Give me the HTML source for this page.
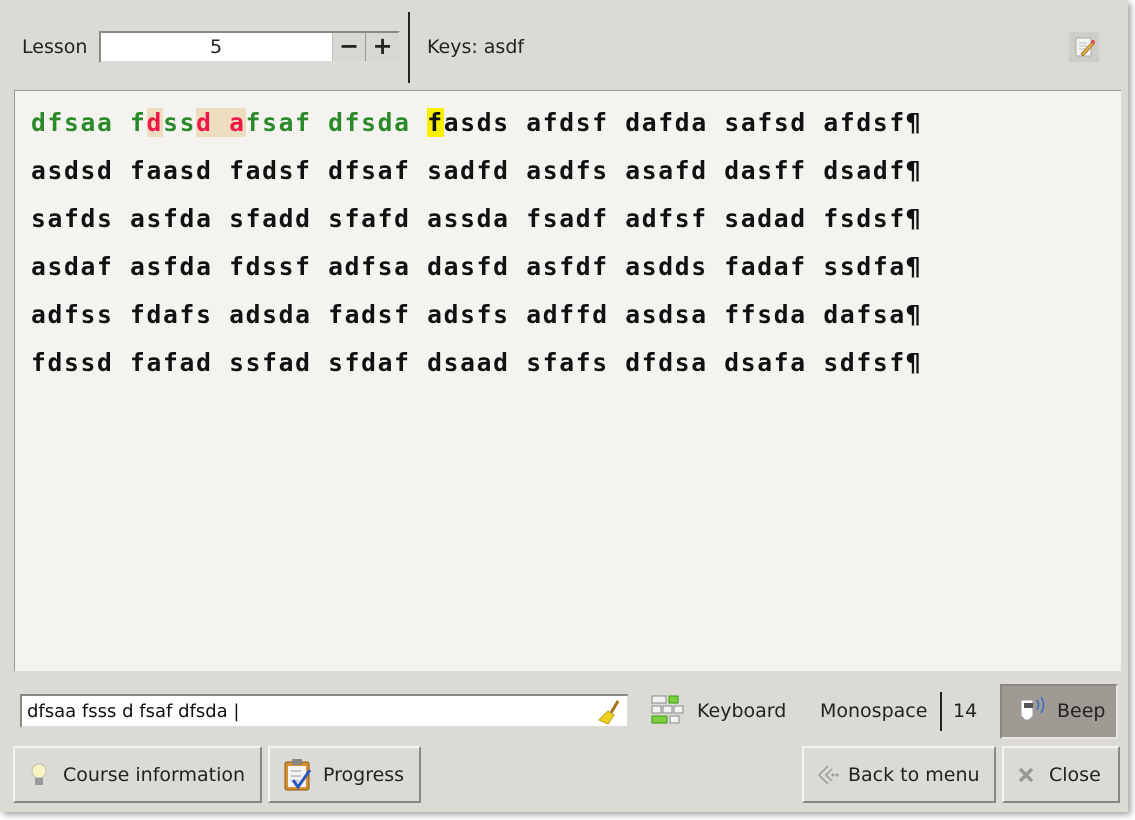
<!DOCTYPE html>
<html><head><style>
body{margin:0;width:1135px;height:820px;background:#ffffff;position:relative;overflow:hidden;font-family:"DejaVu Sans","Liberation Sans",sans-serif;font-size:19px;color:#222}
.win{position:absolute;left:0;top:0;width:1128px;height:812px;background:#dcdad5;box-shadow:3px 3px 6px rgba(0,0,0,.35)}
.abs{position:absolute}
.txt{position:absolute;left:14px;top:90px;width:1106px;height:580px;background:#f5f3f0;border-top:1px solid #9c9a94;border-left:1px solid #9c9a94}
.lines{position:absolute;left:16px;top:8px;font-family:"DejaVu Sans Mono","Liberation Mono",monospace;font-weight:bold;font-size:24.6px;letter-spacing:1.7px;line-height:48px;color:#111;white-space:pre}
.g{color:#2a8a2a}.r{color:#f0184a;background:#eeddbf}.h{background:#eeddbf}.y{background:#f8f000}
.btn{position:absolute;background:#dcdad5;border:2px solid;border-color:#f4f3f1 #8a8883 #8a8883 #f4f3f1;box-sizing:border-box;display:flex;align-items:center}
</style></head><body>
<div class="win">
<div class="abs" style="left:22px;top:36px">Lesson</div>
<div class="abs" style="left:99px;top:31px;width:301px;height:32px;background:#fff;border:2px solid;border-color:#8a8883 #dcdad5 #dcdad5 #8a8883;box-sizing:border-box"></div>
<div class="abs" style="left:210px;top:36px">5</div>
<div class="abs" style="left:332px;top:33px;width:32px;height:28px;background:#d9d7d2;border-left:1px solid #bbb;font-size:24px;font-weight:bold;text-align:center;line-height:26px">−</div>
<div class="abs" style="left:365px;top:33px;width:33px;height:28px;background:#d9d7d2;border-left:1px solid #999;font-size:24px;font-weight:bold;text-align:center;line-height:26px">+</div>
<div class="abs" style="left:408px;top:12px;width:2px;height:71px;background:#222"></div>
<div class="abs" style="left:427px;top:36px">Keys: asdf</div>
<div class="abs" style="left:1069px;top:32px;width:30px;height:30px;background:#cfcdc8"></div>
<svg class="abs" style="left:1074px;top:36px" width="22" height="22"><rect x="2" y="2" width="15" height="18" fill="#f4f4f4" stroke="#aaa"/><path d="M5 7h8M5 10h8M5 13h6" stroke="#bbb"/><path d="M7 18L18 6l2 2L9 20z" fill="#e0b040" stroke="#9a7020" stroke-width=".8"/><circle cx="19" cy="6" r="2" fill="#e05050"/></svg>
<div class="txt"><div class="lines"><span class="g">dfsaa f</span><span class="r">d</span><span class="g">ss</span><span class="r">d </span><span class="r">a</span><span class="g">fsaf dfsda</span> <span class="y">f</span>asds afdsf dafda safsd afdsf¶
asdsd faasd fadsf dfsaf sadfd asdfs asafd dasff dsadf¶
safds asfda sfadd sfafd assda fsadf adfsf sadad fsdsf¶
asdaf asfda fdssf adfsa dasfd asfdf asdds fadaf ssdfa¶
adfss fdafs adsda fadsf adsfs adffd asdsa ffsda dafsa¶
fdssd fafad ssfad sfdaf dsaad sfafs dfdsa dsafa sdfsf¶</div></div>
<div class="abs" style="left:20px;top:694px;width:609px;height:34px;background:#fff;border:2px solid;border-color:#8a8883 #dcdad5 #dcdad5 #8a8883;box-sizing:border-box"></div>
<div class="abs" style="left:27px;top:701px;font-size:18px;color:#111">dfsaa fsss d fsaf dfsda |</div>
<svg class="abs" style="left:598px;top:699px" width="24" height="26"><path d="M20 2l-7 12" stroke="#a07020" stroke-width="3"/><path d="M10 12l6 4-6 9-9-4z" fill="#f0d020" stroke="#c0a010"/></svg>
<svg class="abs" style="left:651px;top:695px" width="34" height="32"><g fill="#f2f2f2" stroke="#888"><rect x="1" y="1" width="14" height="7"/><rect x="1" y="11" width="9" height="7"/><rect x="12" y="11" width="9" height="7"/><rect x="23" y="11" width="9" height="7"/><rect x="19" y="21" width="9" height="7"/></g><g fill="#7cd040" stroke="#3a9a10"><rect x="18" y="1" width="9" height="7"/><rect x="1" y="21" width="15" height="7"/></g></svg>
<div class="abs" style="left:697px;top:700px">Keyboard</div>
<div class="abs" style="left:820px;top:700px">Monospace</div>
<div class="abs" style="left:940px;top:692px;width:2px;height:39px;background:#222"></div>
<div class="abs" style="left:953px;top:700px">14</div>
<div class="abs" style="left:1000px;top:684px;width:118px;height:55px;background:#9f9b94;border:2px solid;border-color:#8a8883 #e8e6e3 #e8e6e3 #8a8883;box-sizing:border-box"></div>
<svg class="abs" style="left:1015px;top:694px" width="36" height="34"><path d="M6 6h12v16l-4 4h-4l-4-4z" fill="#fff" stroke="#999"/><rect x="9" y="9" width="9" height="5" fill="#555"/><path d="M22 6q3 5 0 10M26 3q5 8 0 16" stroke="#3a6ad0" fill="none" stroke-width="1.5"/></svg>
<div class="abs" style="left:1057px;top:700px">Beep</div>
<div class="btn" style="left:13px;top:746px;width:249px;height:57px"><svg style="margin-left:14px" width="20" height="28"><circle cx="10" cy="10" r="7" fill="#f8f4c0" stroke="#bbb"/><rect x="6" y="17" width="8" height="7" fill="#999"/></svg><span style="margin-left:14px">Course information</span></div>
<div class="btn" style="left:268px;top:746px;width:153px;height:57px"><svg style="margin-left:13px" width="30" height="34"><rect x="2" y="4" width="24" height="28" rx="2" fill="#d89030" stroke="#8a5a10"/><rect x="5" y="8" width="18" height="21" fill="#f4f4f4"/><rect x="9" y="1" width="10" height="6" fill="#888"/><path d="M8 13h10M8 18h10M8 23h8" stroke="#999"/><path d="M10 22l5 7 12-17" stroke="#2a5ac0" stroke-width="3" fill="none"/></svg><span style="margin-left:10px">Progress</span></div>
<div class="btn" style="left:802px;top:746px;width:194px;height:57px"><svg style="margin-left:12px" width="24" height="24"><path d="M12 3L3 12l9 9M16 6l-6 6 6 6" stroke="#999" fill="none" stroke-width="1.5"/><circle cx="17" cy="12" r="1.5" fill="#999"/><circle cx="21" cy="12" r="1.5" fill="#999"/></svg><span style="margin-left:8px">Back to menu</span></div>
<div class="btn" style="left:1002px;top:746px;width:118px;height:57px"><svg style="margin-left:13px" width="18" height="18"><path d="M3 3l12 12M15 3L3 15" stroke="#999" stroke-width="3.5"/></svg><span style="margin-left:14px">Close</span></div>
</div>
</body></html>
